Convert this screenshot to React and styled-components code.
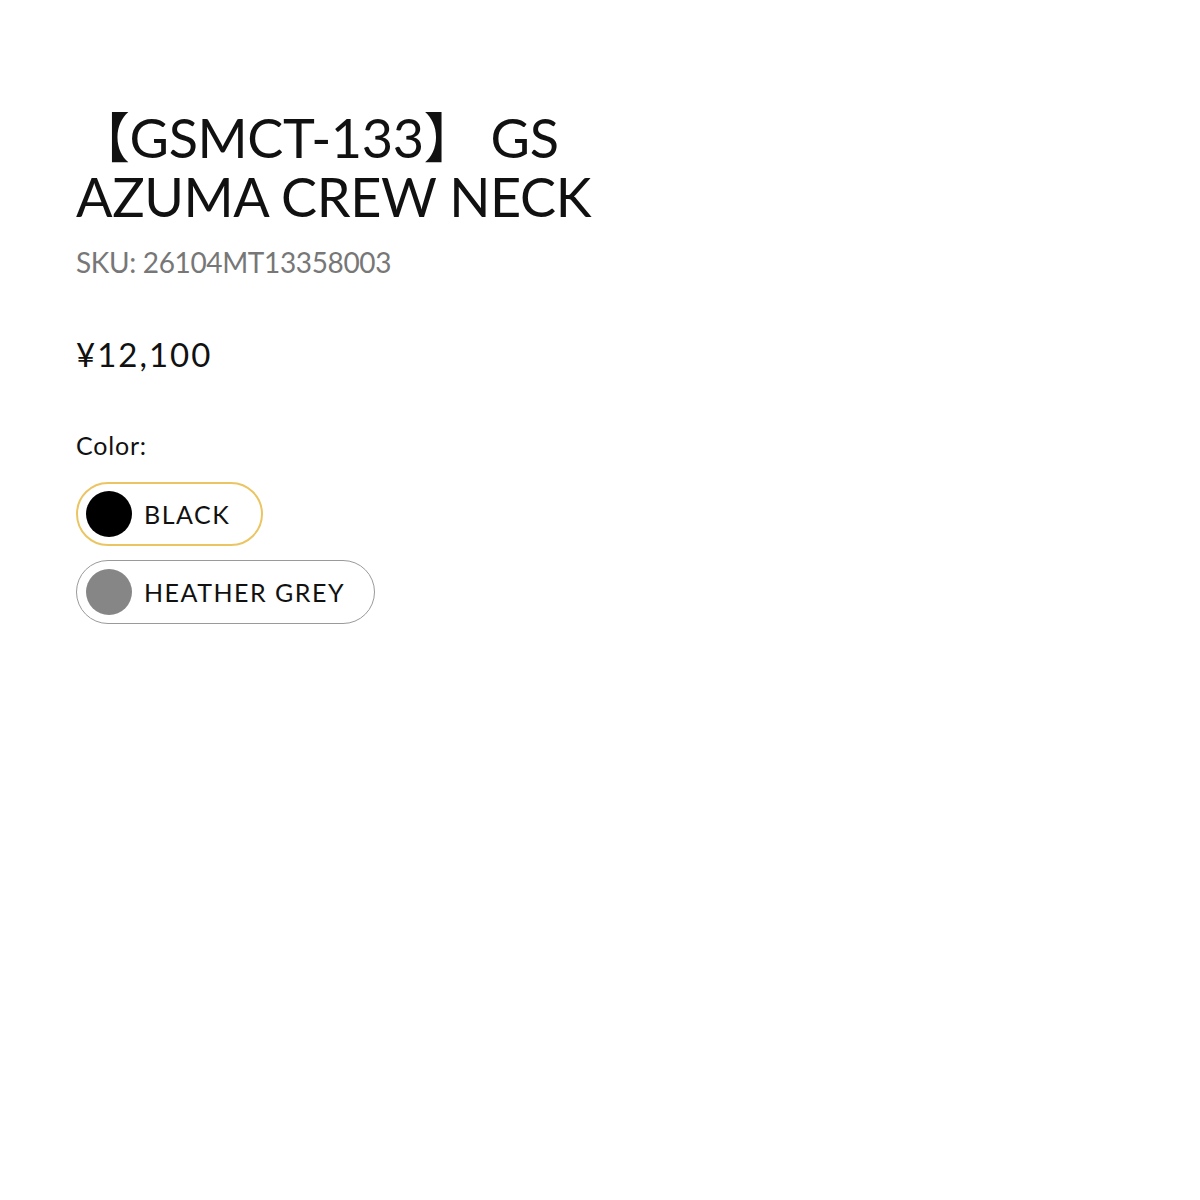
import React from 'react';
import styled, { createGlobalStyle } from 'styled-components';

const GlobalStyle = createGlobalStyle`
  body {
    margin: 0;
    background: #ffffff;
    font-family: "Lato", "Noto Sans CJK JP", sans-serif;
    color: #111111;
  }
`;

const Page = styled.div`
  padding: 108px 76px 0;
  min-height: 1200px;
  box-sizing: border-box;
`;

const Info = styled.div`
  max-width: 560px;
  display: flex;
  flex-direction: column;
  align-items: flex-start;
`;

const Title = styled.h1`
  margin: 0;
  font-size: 54px;
  font-weight: 400;
  line-height: 59px;
  letter-spacing: -0.4px;
  color: #111111;
`;

const Sku = styled.div`
  margin-top: 18px;
  font-size: 28px;
  line-height: 36px;
  letter-spacing: -0.35px;
  color: #777777;
`;

const Price = styled.div`
  margin-top: 54px;
  font-size: 33px;
  line-height: 40px;
  letter-spacing: 2px;
  color: #111111;
`;

const Label = styled.div`
  margin-top: 56px;
  font-size: 25px;
  line-height: 30px;
  letter-spacing: 0.8px;
`;

const Swatches = styled.div`
  margin-top: 22px;
  display: flex;
  flex-direction: column;
  align-items: flex-start;
  gap: 14px;
`;

const Pill = styled.button`
  display: flex;
  align-items: center;
  gap: 12px;
  padding: ${p => (p.$active ? '7px 31px 7px 8px' : '8px 29px 8px 9px')};
  border: ${p => (p.$active ? '2px solid #ebc562' : '1px solid #9a9a9a')};
  border-radius: 40px;
  background: #ffffff;
  font-family: inherit;
  font-size: 25px;
  line-height: 30px;
  letter-spacing: 1.5px;
  color: #111111;
  cursor: pointer;
`;

const Dot = styled.span`
  width: 46px;
  height: 46px;
  border-radius: 50%;
  background: ${p => p.$color};
  flex-shrink: 0;
`;

const colors = [
  { name: 'BLACK', hex: '#000000', active: true },
  { name: 'HEATHER GREY', hex: '#868686', active: false },
];

export default function App() {
  return (
    <Page>
      <GlobalStyle />
      <Info>
        <Title>【GSMCT-133】 GS AZUMA CREW NECK</Title>
        <Sku>SKU: 26104MT13358003</Sku>
        <Price>¥12,100</Price>
        <Label>Color:</Label>
        <Swatches>
          {colors.map(c => (
            <Pill key={c.name} $active={c.active}>
              <Dot $color={c.hex} />
              {c.name}
            </Pill>
          ))}
        </Swatches>
      </Info>
    </Page>
  );
}
